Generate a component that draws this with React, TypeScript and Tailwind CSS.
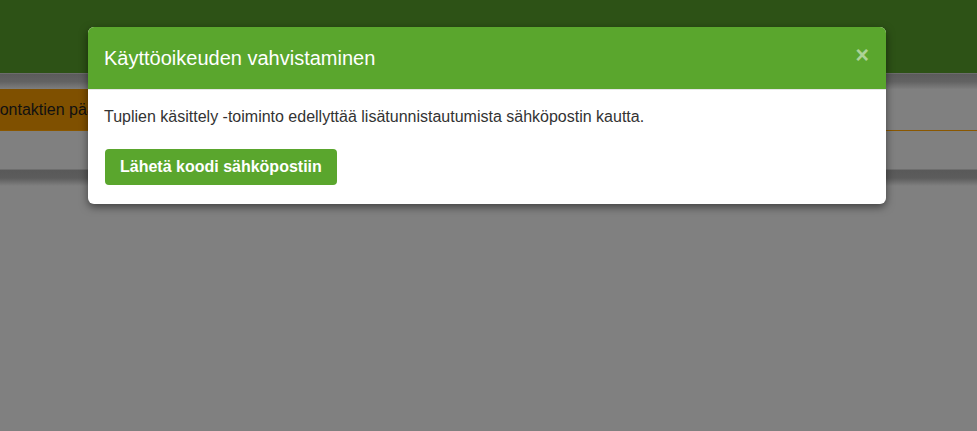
import React from "react";

export default function App() {
  const font = { fontFamily: '"Liberation Sans", Arial, sans-serif' };
  return (
    <div className="relative h-[431px] w-[977px] overflow-hidden bg-[#808080]" style={font}>
      <div className="h-[73px] bg-[#2d5216]" />
      <div className="h-[16px] bg-gradient-to-b from-[#5b5b5b] via-[#626262] to-[#7e7e7e] border-t border-[#6c6c6c]" />
      <div className="flex h-[42px] border-b border-[#8a5700]">
        <div className="flex w-[300px] items-center overflow-hidden bg-[#7f5000]">
          <span className="-ml-[11px] whitespace-nowrap text-[16px] text-[#111]">Kontaktien päällekkäisyydet</span>
        </div>
        <div className="flex-1" />
      </div>
      <div className="h-[38px]" />
      <div className="h-[17px] bg-gradient-to-b from-[#595959] via-[#5c5c5c] to-[#808080] border-t border-[#6e6e6e]" />

      <div className="absolute left-[88px] top-[27px] w-[798px] overflow-hidden rounded-[6px] bg-white shadow-[0_3px_9px_rgba(0,0,0,0.5)]">
        <div className="flex h-[63px] items-center justify-between border-b border-[#e5e5e5] bg-[#5aa62d] pl-[16px] pr-[17px]">
          <h3 className="text-[20px] leading-[24px] text-white">Käyttöoikeuden vahvistaminen</h3>
          <span className="-mt-[6px] text-[23px] font-bold leading-[22px] text-white opacity-50">×</span>
        </div>
        <div className="px-[16px] pt-[16px] pb-[19px]">
          <p className="text-[16px] leading-[22px] text-[#333]">
            Tuplien käsittely -toiminto edellyttää lisätunnistautumista sähköpostin kautta.
          </p>
          <button className="mt-[21px] ml-[1px] h-[36px] rounded-[4px] bg-[#5aa62d] px-[15px] text-[16px] font-bold text-white">
            Lähetä koodi sähköpostiin
          </button>
        </div>
      </div>
    </div>
  );
}
